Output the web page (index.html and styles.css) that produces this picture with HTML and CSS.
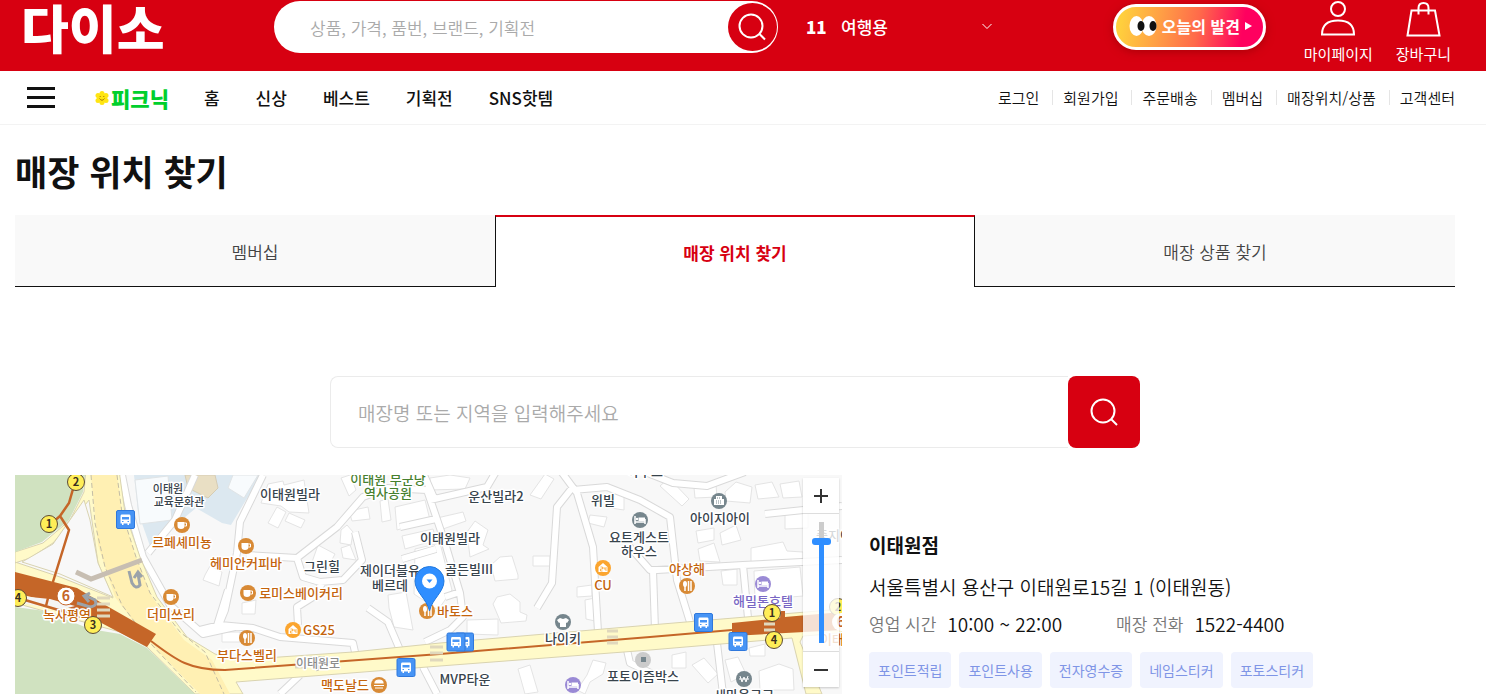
FILE: index.html
```html
<!DOCTYPE html>
<html lang="ko">
<head>
<meta charset="utf-8">
<meta name="viewport" content="width=device-width, initial-scale=1">
<title>매장 위치 찾기</title>
<link rel="stylesheet" href="styles.css">
</head>
<body>
<header class="top">
  <a class="logo" href="#">다이소</a>
  <form class="search" role="search">
    <input class="search-input" type="search" aria-label="통합 검색" placeholder="상품, 가격, 품번, 브랜드, 기획전">
    <button class="search-btn" type="button" aria-label="검색">
      <svg width="32" height="32" viewBox="0 0 32 32" fill="none" stroke="#fff" stroke-width="2"><circle cx="14" cy="15" r="11.5"/><path d="M22 22.500L28 28.500"/></svg>
    </button>
  </form>
  <button class="rank" type="button">
    <b class="rank-no">11</b><span>여행용</span>
    <svg class="rank-arrow" width="12" height="12" viewBox="0 0 12 12" fill="none" stroke="#fff"><path d="M1.500 4L6 8.500L10.500 4"/></svg>
  </button>
  <div class="user">
    <a class="discover" href="#">
      <svg width="28" height="22" viewBox="0 0 28 22"><ellipse cx="7.500" cy="11" rx="7" ry="10" fill="#fff"/><ellipse cx="20" cy="11" rx="7.500" ry="10" fill="#fff"/><ellipse cx="12" cy="11" rx="3.500" ry="5" fill="#111"/><ellipse cx="24" cy="11" rx="3.500" ry="5" fill="#111"/></svg>
      <span>오늘의 발견</span>
      <svg width="7" height="8" viewBox="0 0 7 8"><path d="M0 0L7 4L0 8Z" fill="#fff"/></svg>
    </a>
    <a class="user-link" href="#">
      <svg width="36" height="36" viewBox="0 0 36 36" fill="none" stroke="#fff" stroke-width="2"><circle cx="18" cy="8" r="7"/><path d="M2 33.500C2 24 8 19.500 18 19.500S34 24 34 33.500Z"/></svg>
      <span>마이페이지</span>
    </a>
    <a class="user-link" href="#">
      <svg width="36" height="36" viewBox="0 0 36 36" fill="none" stroke="#fff" stroke-width="2"><path d="M6.500 9.500H30L34.500 34.500H2.500Z"/><path d="M13.500 13.500V7Q13.500 2 18.500 2T23.500 7V13.500"/></svg>
      <span>장바구니</span>
    </a>
  </div>
</header>

<nav class="nav">
  <button class="menu" type="button" aria-label="전체 메뉴">
    <svg width="28" height="22" viewBox="0 0 28 22" fill="#111"><path d="M0 0H28V3H0ZM0 9H28V12H0ZM0 18H28V21H0Z"/></svg>
  </button>
  <a class="picnic" href="#">
    <svg width="14" height="14" viewBox="0 0 14 14"><g fill="#ffe512"><circle cx="7" cy="7" r="5"/><circle cx="7" cy="2.500" r="2.500"/><circle cx="11" cy="4.500" r="2.500"/><circle cx="11" cy="9.500" r="2.500"/><circle cx="7" cy="11.500" r="2.500"/><circle cx="3" cy="9.500" r="2.500"/><circle cx="3" cy="4.500" r="2.500"/></g><path d="M4.500 7.500Q7 11 9.500 7.500M5.200 5V6M8.800 5V6" fill="none" stroke="#a97b00"/></svg>
    <span>피크닉</span>
  </a>
  <ul class="nav-main">
    <li><a href="#">홈</a></li><li><a href="#">신상</a></li><li><a href="#">베스트</a></li><li><a href="#">기획전</a></li><li><a href="#">SNS핫템</a></li>
  </ul>
  <ul class="nav-sub">
    <li><a href="#">로그인</a></li><li><a href="#">회원가입</a></li><li><a href="#">주문배송</a></li><li><a href="#">멤버십</a></li><li><a href="#">매장위치/상품</a></li><li><a href="#">고객센터</a></li>
  </ul>
</nav>

<main class="page">
  <h1 class="title">매장 위치 찾기</h1>
  <div class="tabs">
    <a class="tab" href="#">멤버십</a>
    <a class="tab tab-on" href="#" aria-current="page">매장 위치 찾기</a>
    <a class="tab" href="#">매장 상품 찾기</a>
  </div>
  <form class="find">
    <input class="find-input" type="text" aria-label="매장 검색" placeholder="매장명 또는 지역을 입력해주세요">
    <button class="find-btn" type="button" aria-label="매장 검색하기">
      <svg width="28" height="28" viewBox="0 0 28 28" fill="none" stroke="#fff" stroke-width="2"><circle cx="13" cy="13" r="11.500"/><path d="M21 21L27 27"/></svg>
    </button>
  </form>

  <div class="result">
    <div class="map">
      <svg class="map-art" viewBox="15 475 827 219" preserveAspectRatio="xMinYMin slice" role="img" aria-label="이태원점 주변 지도">
        <defs>
          <g id="cup"><circle r="8" fill="#d88a35"/><path d="M-4.500 -3H2.500V1Q2.500 4 -1 4T-4.500 1Z" fill="#fff"/><path d="M2.500 -2H4.500V1H2.500" fill="none" stroke="#fff"/></g>
          <g id="fork"><circle r="8" fill="#d88a35"/><ellipse cx="-2" cy="-2" rx="2" ry="3" fill="#fff"/><path d="M-2 0V5M1.500 -5V5M4 -5V5" stroke="#fff" stroke-width="1.500"/></g>
          <g id="shop"><circle r="8" fill="#fba52f"/><path d="M-4.500 4V-1L0 -5L4.500 -1V4Z" fill="#fff"/><path d="M-2.500 -1H-.5V1H-2.500V3H-.5M1 -1V1H3M3 -1V3" fill="none" stroke="#fba52f" stroke-width=".8"/></g>
          <g id="bed"><path d="M-5 -4V4M-5 2H5V4M5 2V-1" fill="none" stroke="#fff" stroke-width="1.500"/><path d="M-1.500 -2.500H5V1H-1.500Z" fill="#fff"/><circle cx="-3" cy="-1" r="1.200" fill="#fff"/></g>
          <g id="bus"><rect x="-9" y="-9" width="18" height="18" rx="1.500" fill="#4794f5" stroke="#2f78dc"/><path d="M-4 -5H4Q5 -5 5 -3V4H3.500V5.500H2V4H-2V5.500H-3.500V4H-5V-3Q-5 -5 -4 -5Z" fill="#fff"/><path d="M-3.500 -2.500H3.500V0H-3.500Z" fill="#4794f5"/><path d="M-3.500 2H-2M2 2H3.500" stroke="#4794f5"/></g>
          <g id="exit"><circle r="8.500" fill="#ffee58" stroke="#5c4a35"/></g>
          <path id="streets" d="M263 475L240 522L237 553L225 610L218 627M247 555L297 558L337 527L363 497L387 488L427 490L445 543L460 593L463 617L450 630L425 642M430 500L487 487L497 470M297 558L303 577L320 582L343 580L362 560L355 532M323 582L313 597L297 607L298 625M200 630L220 625L253 628L280 637L353 643L355 652M368 608L388 622L400 650M572 488L557 507L552 583L537 608M560 470L577 493L593 547L598 632M573 490L607 487L640 500L670 517L677 580L690 622M628 545L650 570L657 570L743 565L842 560M653 570L655 630M743 565L748 618M645 472L673 483L707 486L745 472M765 514L842 506M717 643L723 694M627 650L630 663L655 675M423 667L437 694M424 475L435 500M402 559L436 549M400 527L436 519M280 694L300 675M445 597L460 592M122 475L128 505L143 557L170 605L203 634L235 627M215 632L228 590M148 553L175 520L195 475"/>
        </defs>
        <rect x="15" y="475" width="827" height="219" fill="#f8f8f8"/>
        <path fill="#dce8f0" d="M134 475H262L246 500L231 525L222 523L196 508L150 546L138 512Z"/>
        <path fill="#f8fbfd" stroke="#e0e4e6" d="M135 480L168 476L172 520L140 524ZM233 475H258L244 498L228 488Z"/>
        <path fill="#e9dfc4" stroke="#d5ccb4" d="M185 475H215L218 488L208 498L188 488Z"/>
        <path fill="#fff" stroke="#e4e4e4" d="M268 484L283 481L284 485L304 480L309 513L289 512L281 506L261 503ZM277 507L286 512L278 528L268 523ZM289 513L305 520L301 528L285 521ZM341 530L347 525L353 532L351 545L340 543ZM341 548L350 545L356 560L343 558ZM318 545L335 554L325 573L311 565ZM205 575L210 566L222 572L219 586L203 580ZM242 603L256 600L255 614L242 614ZM222 632H240V642H222ZM388 595L406 592L413 630L394 627L389 608ZM349 511L368 507L370 519L352 521ZM380 501L388 499L391 520L382 522ZM395 507L425 500L430 520L397 530ZM402 536L433 529L436 540L405 549ZM415 549L440 543L452 590L438 610L414 594ZM341 478L350 475L356 490L349 496ZM437 518L463 512L466 521L440 530ZM467 532L475 521L488 530L483 545L489 549L470 557ZM491 565L500 557L512 556L518 575L518 579L495 581ZM497 597L510 594L520 602V612L527 615L526 621L501 623L493 604ZM530 495L545 474L554 479L541 499ZM533 556H550V566H533ZM577 587L592 585V596L577 597ZM585 600L595 598V621L586 619ZM590 515L607 517L604 527L588 523ZM612 494L624 493V510L604 507ZM467 620L498 619V635L467 634ZM430 478L450 475L470 478L465 489L430 490ZM518 669L530 665L538 692L525 694ZM587 675L593 660L606 663L603 674L590 682L585 694L577 690ZM660 486L669 478L689 499L682 506ZM696 531L714 528V540L698 543ZM720 533L736 525L741 540L722 545ZM698 549L714 543L720 562L700 561ZM694 488L716 485L717 497L695 498ZM725 492L736 482L752 487L750 503L726 501ZM755 485L772 482L779 497L758 499ZM780 484L799 481L802 497L783 498ZM721 571L737 569V585H723ZM754 571L800 567L803 596L755 600ZM751 548L783 542L787 551L803 552V560L751 562ZM785 514L808 512V528L785 529ZM672 655L686 652V668H672ZM692 665L704 658L718 674L708 683ZM725 660L738 657L746 674L731 682ZM749 648L765 644V656H750ZM759 671L779 664L793 669L794 690H760Z"/>

        <g fill="none" stroke-linejoin="round" stroke-linecap="butt">
          <use href="#streets" stroke="#d9d9d9" stroke-width="8"/>
          <use href="#streets" stroke="#fff" stroke-width="6"/>
        </g>

        <path fill="#fffac9" stroke="#d9d3b0" d="M86 470H119L125 513L140 557L157 597L187 637L215 654L236 660L353 652L440 643L650 625L842 609V633L803 636L800 642L822 694H806L792 638L650 650L440 666L236 682L243 694H195L147 647L120 632L15 603V562L60 577L113 598L98 563L89 500L73 520L53 543L30 558L15 563V552L43 543L70 520L84 492Z"/>
        <path fill="#fff0b3" d="M91 475H117L122 513L136 557L152 597L184 640L212 660L230 694H200L152 645L115 597L98 545Z"/>
        <path fill="none" stroke="#c4bda5" stroke-dasharray="5 3" d="M91 475L95 523L105 567L122 605L152 645L196 692M117 475L122 513L136 557L150 593L180 632L205 652L224 694"/>
        <path fill="#f8f8f8" stroke="#d9d3b0" d="M84 500L90 520L98 563L113 597L60 574L22 562L53 544Z"/>
        <path fill="#d0e2c0" d="M15 475H85L83 492L69 520L42 542L15 552ZM15 607L45 611L90 629L120 634L147 648L195 694H15Z"/>
        <path fill="#c56628" d="M15 572L77 588L100 602L156 634L147 647L92 618L60 604L15 593Z"/>
        <path fill="#f4f4f4" d="M20 596L50 599L75 606L60 610L22 603Z"/>
        <g fill="none" stroke="#c56628" stroke-width="2.500">
          <path d="M73 489L69 503L60 516L69 530L52 585M60 516L52 523M25 600L92 620M49 594L46 606"/>
          <path stroke-width="2" d="M151 641C177 661 190 670 225 670L440 654L650 637L732 630"/>
        </g>
        <path fill="#c56628" d="M732 623L780 618L781 611H785V617L842 612V630L732 636Z"/>
        <path fill="none" stroke="#c7beb2" stroke-width="5" d="M76 572L91 579L142 560"/>
        <g fill="none" stroke="#e0d8bd" stroke-width="3"><path d="M97 598H110M97 604H110M97 610H110M97 616H110M295 661H306M295 667H306M430 647H443M430 653H443M430 660H443M607 631H618M607 637H618M607 643H618M764 624H775M764 630H775"/></g>
        <g fill="none" stroke="#9ba3aa" stroke-width="3"><path d="M129 571L132 583Q136 590 140 585L138 574M134 578L138 572L142 577M77 603L90 607Q98 606 95 600L86 596M90 593L84 596L89 602M308 667V661Q308 658 312 658H323Q326 658 326 661V664Q326 667 322 667H315M316 663L322 667L316 670"/></g>

        <use href="#cup" x="182" y="525"/><use href="#cup" x="246" y="546"/><use href="#cup" x="171" y="597"/><use href="#cup" x="248" y="593"/>
        <use href="#fork" x="247" y="638"/><use href="#fork" x="687" y="586"/><use href="#fork" x="427" y="611"/>
        <circle cx="379" cy="685" r="8" fill="#d88a35"/><path d="M375 683Q375 680 379 680T383 683ZM374 685.500H384M375 688H383" fill="#fff" stroke="#fff" stroke-width="1.200"/>
        <use href="#shop" x="293" y="630"/><use href="#shop" x="603" y="568"/>
        <g fill="#76868d"><circle cx="640" cy="520" r="8"/><circle cx="719" cy="501" r="8"/><circle cx="563" cy="622" r="8"/><circle cx="744" cy="679" r="8"/></g>
        <use href="#bed" x="640" y="520"/>
        <path d="M716 496H722V499H724V505H714V499H716Z" fill="#fff"/><path d="M717 498H721M716 501H722M716 503H722" stroke="#76868d" stroke-dasharray="1 1"/>
        <path d="M560 618L563 619L566 618L569 620L567 623L566 622.500V627H560V622.500L559 623L557 620Z" fill="#fff"/>
        <path d="M740 676L742 682L744 677L746 682L748 676M739 679H749" fill="none" stroke="#fff"/>
        <circle cx="643" cy="660" r="8" fill="#cbcbcb"/><rect x="641" y="657" width="5" height="5" fill="#76868d"/>
        <g fill="#9a8ad5"><circle cx="763" cy="584" r="8"/><circle cx="573" cy="685" r="8"/></g>
        <use href="#bed" x="763" y="584"/><use href="#bed" x="573" y="685"/>

        <g class="lb lb-s"><text x="168" y="493">이태원</text><text x="179" y="506">교육문화관</text></g>
        <g class="lb">
          <text x="290" y="499">이태원빌라</text><text x="496" y="501">운산빌라2</text><text x="603" y="505">위빌</text><text x="639" y="542">요트게스트</text><text x="639" y="556">하우스</text><text x="645" y="476">하우스</text><text x="720" y="523">아이지아이</text><text x="450" y="543">이태원빌라</text><text x="469" y="574">골든빌III</text><text x="390" y="575">제이더블유</text><text x="390" y="590">베르데</text><text x="322" y="571">그린힐</text><text x="465" y="684">MVP타운</text><text x="563" y="643">나이키</text><text x="643" y="681">포토이즘박스</text><text x="744" y="700">새마을금고</text><text x="834" y="540">중지이</text>
        </g>
        <g class="lb lb-food">
          <text x="182" y="547">르페셰미뇽</text><text x="246" y="568">헤미안커피바</text><text x="171" y="619">더미쓰리</text><text x="247" y="660">부다스벨리</text><text x="301" y="598">로미스베이커리</text><text x="319" y="635">GS25</text><text x="345" y="690">맥도날드</text><text x="455" y="616">바토스</text><text x="603" y="590">CU</text><text x="687" y="574">야상해</text><text x="67" y="620">녹사평역</text><text x="838" y="644">이태원</text>
        </g>
        <g class="lb lb-park"><text x="388" y="484">이태원 부군당</text><text x="388" y="498">역사공원</text></g>
        <g class="lb lb-hotel"><text x="763" y="606">해밀톤호텔</text></g>
        <g class="lb lb-road"><text x="318" y="668">이태원로</text></g>

        <use href="#bus" x="125.500" y="519.500"/><use href="#bus" x="406" y="667.500"/><use href="#bus" x="464.500" y="642"/><use href="#bus" x="456" y="642"/><use href="#bus" x="703.500" y="622.500"/><use href="#bus" x="738" y="641.500"/>
        <use href="#exit" x="76" y="482"/><use href="#exit" x="49" y="524"/><use href="#exit" x="18" y="598"/><use href="#exit" x="93" y="625"/><use href="#exit" x="772" y="613"/><use href="#exit" x="774" y="640"/><use href="#exit" x="838" y="607"/>
        <circle cx="66" cy="596" r="9" fill="#fff" stroke="#c56628"/><circle cx="841" cy="622" r="9" fill="#fff"/>
        <g class="no"><text x="76" y="486">2</text><text x="49" y="528">1</text><text x="18" y="602">4</text><text x="93" y="629">3</text><text x="772" y="617">1</text><text x="774" y="644">4</text><text x="838" y="611">2</text></g>
        <g class="no no-line"><text x="66" y="601">6</text><text x="841" y="627">6</text></g>
        <path fill="#2f8eff" stroke="#2179df" d="M429.500 611C427 599 415 592 415 581A14.500 14.500 0 0 1 444 581C444 592 432 599 429.500 611Z"/>
        <circle cx="429.500" cy="581" r="7.500" fill="#fff"/><path d="M426.500 579.500H432.500L429.500 583Z" fill="#2f8eff"/>
      </svg>
      <div class="zoom">
        <button class="zoom-btn" type="button" aria-label="확대"><svg width="14" height="14" viewBox="0 0 14 14" stroke="#333" stroke-width="2"><path d="M0 7H14M7 0V14"/></svg></button>
        <div class="zoom-mid"><input class="zoom-range" type="range" min="0" max="100" value="86" aria-label="지도 확대 수준"></div>
        <button class="zoom-btn" type="button" aria-label="축소"><svg width="14" height="14" viewBox="0 0 14 14" stroke="#333" stroke-width="2"><path d="M0 7H14"/></svg></button>
      </div>
    </div>

    <section class="store">
      <h2 class="store-name">이태원점</h2>
      <p class="store-addr">서울특별시 용산구 이태원로15길 1 (이태원동)</p>
      <dl class="store-facts">
        <div class="fact"><dt>영업 시간</dt><dd>10:00 ~ 22:00</dd></div>
        <div class="fact"><dt>매장 전화</dt><dd>1522-4400</dd></div>
      </dl>
      <ul class="chips"><li>포인트적립</li><li>포인트사용</li><li>전자영수증</li><li>네임스티커</li><li>포토스티커</li></ul>
    </section>
  </div>
</main>
</body>
</html>
```
FILE: styles.css
```css
* { box-sizing: border-box; }
body { margin: 0; font-family: "Noto Sans CJK KR", sans-serif; color: #111; background: #fff; }
a { color: inherit; text-decoration: none; }
button { padding: 0; border: 0; background: none; color: inherit; font: inherit; cursor: pointer; }
input { font: inherit; }
ul, dl, dd, h1, h2, p { margin: 0; padding: 0; }
ul { list-style: none; }
svg { display: block; flex: none; }

.top { display: flex; align-items: flex-start; height: 71px; padding: 0 35px 0 21px; background: #d70011; color: #fff; }
.logo { flex: 0 0 253px; font-size: 52px; font-weight: 900; line-height: 54px; }
.search { display: flex; align-items: center; flex: 0 1 504px; height: 52px; margin-top: 1px; padding: 0 1px 0 36px; border-radius: 26px; background: #fff; }
.search-input { flex: 1; min-width: 0; border: 0; outline: 0; padding: 0; background: none; font-size: 17px; font-weight: 350; }
.search-input::placeholder { color: #aaa; opacity: 1; }
.search-btn { display: grid; place-items: center; flex: none; width: 49px; height: 48px; border-radius: 50%; background: #d70011; }
.rank { display: flex; align-items: center; flex: 0 0 187px; height: 52px; margin-left: 28px; font-size: 17px; font-weight: 500; }
.rank-no { width: 35px; font-size: 17px; font-weight: 900; text-align: left; }
.rank-arrow { margin-left: auto; }
.user { display: flex; align-items: flex-start; gap: 23px; margin-left: auto; }
.discover { display: flex; align-items: center; gap: 5px; width: 153px; height: 46px; margin: 4px 15px 0 0; padding: 0 0 2px 13px; border: 3px solid #fff; border-radius: 23px; background: linear-gradient(100deg, #ffcf3d 5%, #ff9f45 30%, #ff6a4a 55%, #ff005f 85%); box-shadow: 0 2px 8px #8008; font-size: 16px; font-weight: 700; white-space: nowrap; }
.user-link { display: flex; flex-direction: column; align-items: center; gap: 8px; padding-top: 1px; font-size: 15px; font-weight: 400; line-height: 18px; white-space: nowrap; }

.nav { display: flex; align-items: center; height: 54px; padding: 0 31px 0 27px; border-bottom: 1px solid #f3f3f3; white-space: nowrap; }
.menu { margin-right: 40px; }
.picnic { display: flex; align-items: center; gap: 2px; margin-right: 35px; color: #00cf2d; font-size: 21px; font-weight: 900; line-height: 24px; }
.nav-main { display: flex; gap: 36px; font-size: 17px; font-weight: 500; }
.nav-sub { display: flex; margin-left: auto; font-size: 15px; font-weight: 350; line-height: 15px; }
.nav-sub li + li { margin-left: 13px; padding-left: 10px; border-left: 1px solid #e5e5e5; }

.page { padding: 21px 31px 0 15px; }
.title { font-size: 35px; font-weight: 700; line-height: 50px; }
.tabs { display: grid; grid-template-columns: repeat(3, 1fr); margin-top: 19px; }
.tab { display: grid; place-items: center; height: 72px; padding-top: 1px; border-bottom: 1px solid #111; background: #f9f9f9; color: #444; font-size: 17px; font-weight: 350; }
.tab-on { border: solid #111; border-width: 2px 1px 0; border-top-color: #d70011; background: #fff; color: #d70011; font-weight: 700; }
.find { display: flex; width: 810px; max-width: 100%; margin: 89px auto 27px; }
.find-input { flex: 1; min-width: 0; height: 72px; padding: 0 27px; border: 1px solid #ebebeb; border-right: 0; border-radius: 8px 0 0 8px; outline: 0; font-size: 19px; font-weight: 350; }
.find-input::placeholder { color: #aaa; opacity: 1; }
.find-btn { display: grid; place-items: center; width: 72px; height: 72px; border-radius: 8px; background: #d70011; }

.result { display: grid; grid-template-columns: 827fr 586fr; column-gap: 27px; }
.map { position: relative; overflow: hidden; }
.map-art { width: 100%; height: 219px; }
.lb { font-size: 13px; font-weight: 500; text-anchor: middle; fill: #37434c; stroke: #fff; stroke-width: 3px; stroke-linejoin: round; paint-order: stroke; }
.lb-s { font-size: 11px; }
.lb-food { fill: #c4640c; }
.lb-park { fill: #47802f; }
.lb-hotel { fill: #7866c4; }
.lb-road { font-size: 12px; fill: #8d8d8d; }
.no { font-size: 11px; font-weight: 700; text-anchor: middle; fill: #3a2e20; }
.no-line { font-size: 14px; fill: #c56628; }
.zoom { position: absolute; top: 3px; right: 3px; display: flex; flex-direction: column; width: 36px; box-shadow: 0 1px 2px #0003; }
.zoom-btn { display: grid; place-items: center; height: 35px; background: #fff; }
.zoom-mid { display: grid; place-items: center; height: 139px; border: solid #ddd; border-width: 1px 0; background: #fffc; }
.zoom-range { appearance: none; writing-mode: vertical-lr; direction: rtl; width: 19px; height: 121px; margin: 0; background: linear-gradient(#ccc 17%, #2f8eff 17%) center / 5px 100% no-repeat; }
.zoom-range::-webkit-slider-thumb { appearance: none; width: 19px; height: 7px; border-radius: 3px; background: #2f8eff; }

.store { padding-top: 56px; }
.store-name { font-size: 19px; font-weight: 700; line-height: 28px; }
.store-addr { margin-top: 14px; font-size: 19px; font-weight: 350; line-height: 28px; }
.store-facts { display: flex; gap: 54px; margin-top: 10px; line-height: 26px; font-weight: 350; }
.fact { display: flex; gap: 11px; }
.fact dt { font-size: 17px; color: #777; }
.fact dd { font-size: 19px; }
.chips { display: flex; gap: 8px; margin-top: 15px; }
.chips li { padding: 0 9px; border-radius: 4px; background: #f0f3fe; color: #7f95e6; font-size: 14px; font-weight: 400; line-height: 36px; }
```
